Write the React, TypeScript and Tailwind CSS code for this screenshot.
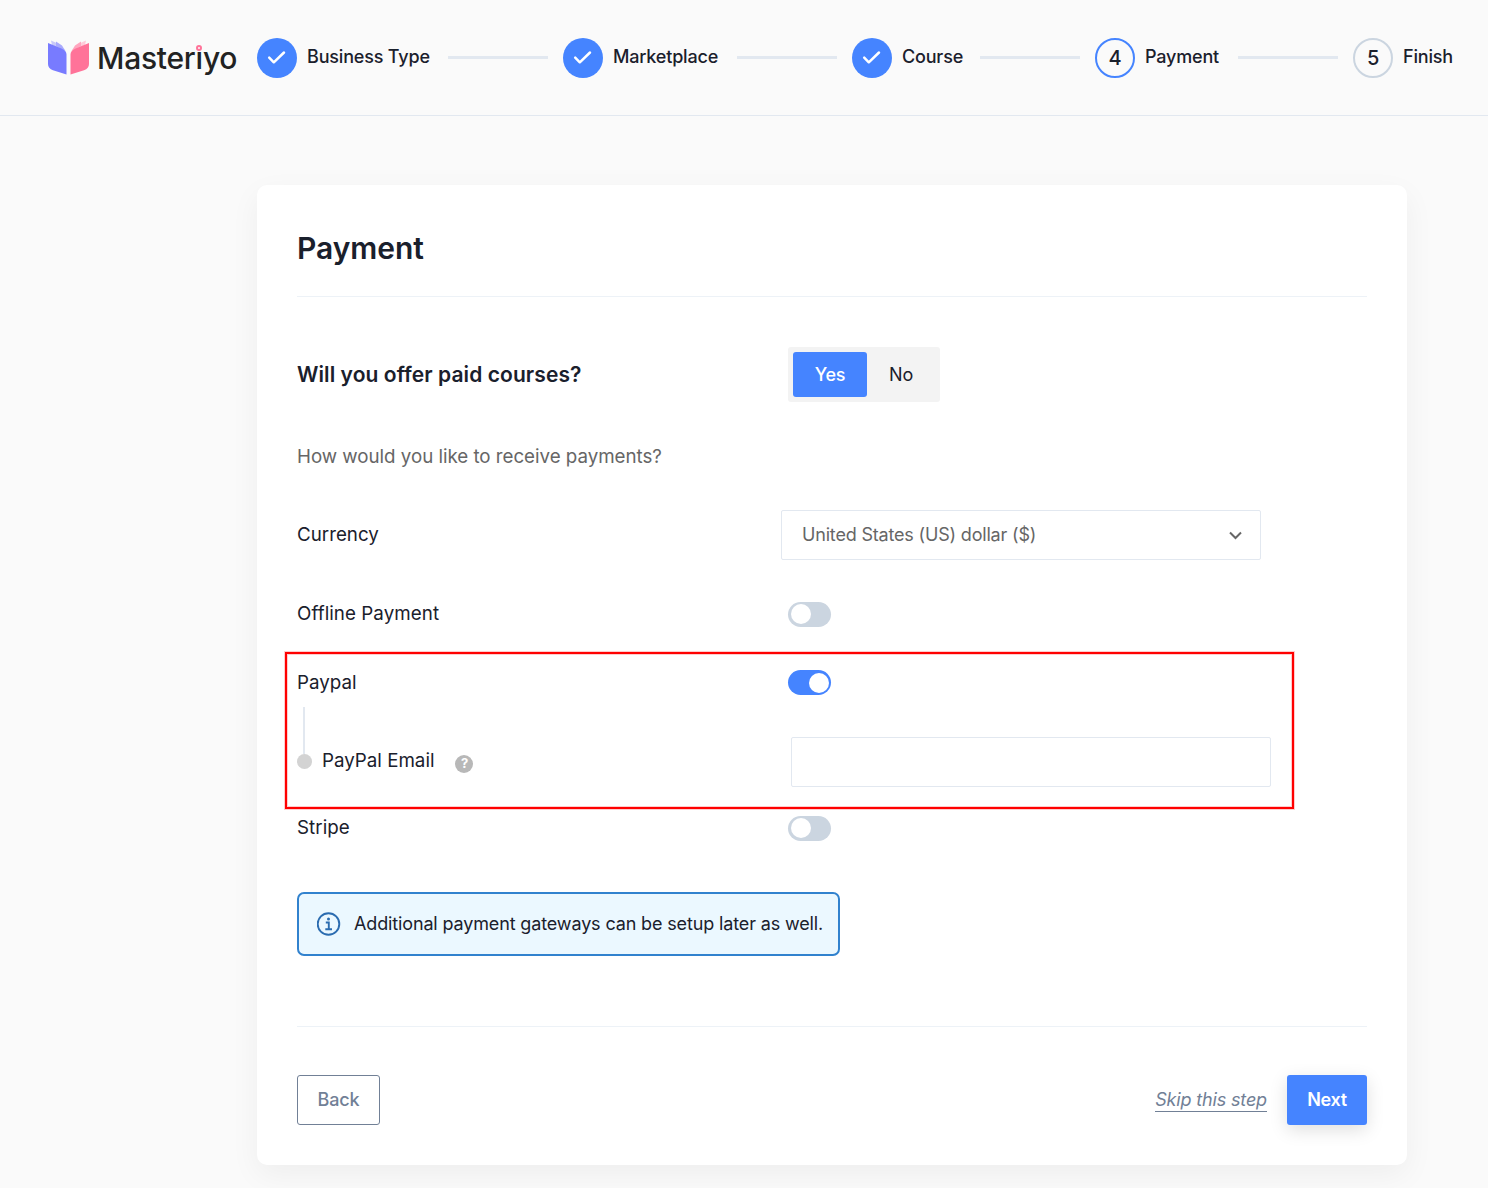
import React from "react";

const steps = [
  { label: "Business Type", done: true, width: "w-[191px]" },
  { label: "Marketplace", done: true, width: "w-[174px]" },
  { label: "Course", done: true, width: "w-[128px]" },
  { label: "Payment", done: false, width: "w-[143px]" },
  { label: "Finish", done: false, width: "w-[120px]" },
];

function Logo() {
  return (
    <div className="flex h-[40px] w-[209px] shrink-0 items-center">
      <svg width="42" height="36" viewBox="0 0 42 36" className="mt-px shrink-0">
        <path d="M3 0.500 L12 4.500 L17 11 L4 5 Z" fill="#c9caf9" />
        <path d="M8 1.500 L14 5.500 L17.500 11 L8 6 Z" fill="#a9aafc" />
        <path d="M38 0.500 L29 4.500 L24 11 L37 5 Z" fill="#ffcbd9" />
        <path d="M33 1.500 L27 5.500 L23.500 11 L33 6 Z" fill="#ffa6bf" />
        <path d="M0 3 L13.500 8.500 Q18.500 10.500 18.500 14.500 V34.500 L5 30.200 Q0 28.500 0 24 Z" fill="#787bff" />
        <path d="M41 3 L27.500 8.500 Q22.500 10.500 22.500 14.500 V34.500 L36 30.200 Q41 28.500 41 24 Z" fill="#ff7399" />
      </svg>
      <div className="relative ml-[7px]">
        <span className="text-[30px] leading-[40px] font-[450] tracking-[-0.25px] text-[#222222]">Masteriyo</span>
        <span className="absolute top-[7px] left-[99px] size-[6px] rounded-full border-2 border-[#ff7399] bg-[#fafafa] shadow-[0_0_0_1px_#fafafa]" />
      </div>
    </div>
  );
}

function Step({ label, done, width, n }: { label: string; done: boolean; width: string; n: number }) {
  return (
    <div className="flex items-center">
      <div className={`${width} flex items-center gap-[10px]`}>
        {done ? (
          <span className="flex size-10 items-center justify-center rounded-full bg-[#4584ff]">
            <svg width="40" height="40" viewBox="0 0 40 40" fill="none" stroke="#fff" strokeWidth="2.500" strokeLinecap="round" strokeLinejoin="round">
              <path d="M12.200 19.700 L16.800 24.300 L27 14.500" />
            </svg>
          </span>
        ) : (
          <span
            className={`flex size-10 items-center justify-center rounded-full border-2 text-[20px] font-medium ${
              n === 4 ? "border-[#4584ff]" : "border-[#cbd5e0]"
            }`}
          >
            {n}
          </span>
        )}
        <span className="-mt-0.5 text-[18px] leading-[26px] font-medium tracking-[-0.18px] whitespace-nowrap">{label}</span>
      </div>
      {n < 5 && <span className="mr-[15px] -mt-px h-[3px] w-[100px] bg-[#e2e8f0]" />}
    </div>
  );
}

function Toggle({ on = false }: { on?: boolean }) {
  return (
    <button
      role="switch"
      aria-checked={on}
      className={`flex h-[25px] w-[43px] items-center rounded-full px-[3px] ${on ? "justify-end bg-[#4584ff] pr-[2px]" : "bg-[#cbd5e0] pb-px"}`}
    >
      <span className="size-5 rounded-full bg-white" />
    </button>
  );
}

export default function App() {
  return (
    <div className="h-[1188px] w-[1488px] overflow-hidden bg-[#fafafa] font-['Inter',sans-serif] text-[18px] tracking-[-0.15px] text-[#1a202c]">
      <header className="flex h-[116px] items-center border-b border-[#e2e8f0] pl-[48px]">
        <Logo />
        {steps.map((s, i) => (
          <Step key={s.label} {...s} n={i + 1} />
        ))}
      </header>

      <main className="mt-[69px] ml-[257px] h-[980px] w-[1150px] rounded-[10px] bg-white px-10 shadow-[0_10px_30px_rgba(0,0,0,0.05)]">
        <h1 className="flex h-[112px] items-center border-b border-[#edf2f7] pt-[15px] text-[30px] font-semibold tracking-[-0.05px]">Payment</h1>

        <div className="mt-[50px] flex h-[55px] items-center">
          <h2 className="w-[491px] text-[21px] font-semibold tracking-[0.08px]">Will you offer paid courses?</h2>
          <div className="flex h-[55px] w-[152px] rounded-[3px] bg-[#f3f3f3] p-[5px]">
            <button className="w-[74px] rounded-[3px] bg-[#4584ff] pb-px font-medium tracking-[-0.3px] text-white">Yes</button>
            <button className="w-[68px] pb-px">No</button>
          </div>
        </div>

        <p className="mt-[40px] h-[30px] text-[18.750px] leading-[30px] tracking-[-0.03px] text-[#666666]">How would you like to receive payments?</p>

        <div className="mt-[38px] flex h-[50px] items-center">
          <span className="w-[484px] text-[18.750px] tracking-normal">Currency</span>
          <div className="flex h-[50px] w-[480px] items-center justify-between rounded-[2px] border border-[#e2e8f0] pr-[18px] pl-5 text-[#666666]">
            <span className="pb-[2px] tracking-[-0.18px]">United States (US) dollar ($)</span>
            <svg width="13" height="9" viewBox="0 0 13 9" className="mt-px" fill="none" stroke="#666666" strokeWidth="2">
              <path d="M1 1.500 L6.500 7 L12 1.500" />
            </svg>
          </div>
        </div>

        <div className="mt-[42px] flex h-[25px] items-center">
          <span className="w-[491px] text-[18.750px] tracking-[0.06px]">Offline Payment</span>
          <Toggle />
        </div>

        <section className="mt-[25px] -ml-3 h-[157px] w-[1009px] border-2 border-[#ff0000] pt-4 pl-[10px] shadow-[0_0_0_1px_rgba(255,0,0,0.2),inset_0_0_0_1px_rgba(255,0,0,0.2)]">
          <div className="flex h-[25px] items-center">
            <span className="w-[491px] pt-px text-[18.750px] tracking-normal">Paypal</span>
            <Toggle on />
          </div>
          <div className="mt-3 flex">
            <div className="flex w-[15px] flex-col">
              <span className="ml-[6px] h-[47px] w-[2px] bg-[#e2e8f0]" />
              <span className="size-[15px] rounded-full bg-[#d3d3d3]" />
            </div>
            <div className="mt-[30px] flex h-[50px] items-center">
              <span className="-mt-0.5 ml-[10px] text-[18.750px] tracking-normal">PayPal Email</span>
              <span className="mt-[3px] ml-[21px] flex size-[18px] items-center justify-center rounded-full bg-[#b8b8b8] text-[13px] font-bold text-white">?</span>
            </div>
            <input aria-label="PayPal Email" className="mt-[30px] mr-[21px] ml-auto h-[50px] w-[480px] rounded-[2px] border border-[#e2e8f0]" />
          </div>
        </section>

        <div className="mt-[7px] flex h-[25px] items-center">
          <span className="w-[491px] text-[18.750px] tracking-[0.06px]">Stripe</span>
          <Toggle />
        </div>

        <div className="mt-[51px] flex h-[64px] w-[543px] items-center rounded-[7px] border-2 border-[#3182ce] bg-[#ebf8ff] pl-[18px]">
          <svg width="24" height="24" viewBox="0 0 24 24" className="-mt-px" fill="none" stroke="#2b6cb0" strokeWidth="1.900">
            <circle cx="11.500" cy="12" r="10.800" />
            <path d="M8.800 10.500 H11.800 V17 M8.300 17.200 H15" />
            <circle cx="11.500" cy="7" r="1.500" fill="#2b6cb0" stroke="none" />
          </svg>
          <span className="ml-[13px] pb-[2px] whitespace-nowrap tracking-[-0.14px]">Additional payment gateways can be setup later as well.</span>
        </div>

        <footer className="mt-[70px] flex items-center border-t border-[#edf2f7] pt-12">
          <button className="h-[50px] w-[83px] rounded-[3px] border border-[#718096] pb-[2px] font-medium tracking-[-0.1px] text-[#718096]">Back</button>
          <a className="ml-auto border-b border-[#718096] leading-[22px] text-[#718096] italic">Skip this step</a>
          <button className="ml-5 h-[50px] w-20 rounded-[3px] bg-[#4584ff] pb-[2px] font-semibold tracking-[-0.3px] text-white shadow-[0_5px_18px_rgba(0,0,0,0.13)]">Next</button>
        </footer>
      </main>
    </div>
  );
}
